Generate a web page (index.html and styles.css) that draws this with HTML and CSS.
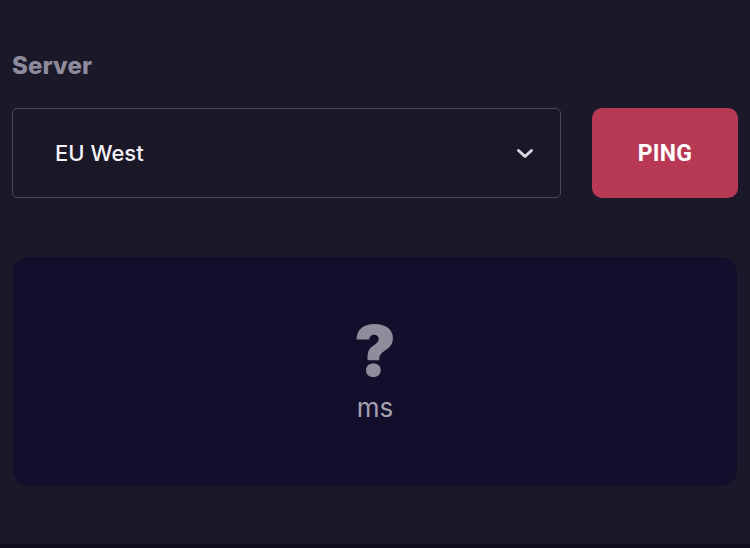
FILE: index.html
```html
<!DOCTYPE html>
<html lang="en">
<head>
<meta charset="utf-8">
<title>Ping</title>
<link rel="stylesheet" href="styles.css">
</head>
<body>
<main class="page">
  <label class="label" for="server">Server</label>
  <div class="controls">
    <div class="select">
      <span class="select-value">EU West</span>
      <svg class="chevron" width="18" height="12" viewBox="0 0 18 12" aria-hidden="true">
        <path d="M2.5 2.5 L9 8.5 L15.5 2.5" fill="none" stroke="#d9d7e2" stroke-width="3" stroke-linecap="round" stroke-linejoin="round"/>
      </svg>
    </div>
    <button class="ping">PING</button>
  </div>
  <section class="result">
    <div class="result-value">?</div>
    <div class="result-unit">ms</div>
  </section>
</main>
<div class="footer-strip"></div>
</body>
</html>
```

FILE: styles.css
```css
html, body {
  margin: 0;
  padding: 0;
  height: 100%;
}
body {
  background: #1b1829;
  font-family: Inter, "Noto Sans", sans-serif;
  color: #ffffff;
  display: flex;
  flex-direction: column;
  overflow: hidden;
}
.page {
  flex: 1;
  padding: 52px 12px 0 12px;
  display: flex;
  flex-direction: column;
}
.label {
  font-size: 24px;
  line-height: 28px;
  font-weight: 800;
  color: #8e8b9c;
  letter-spacing: 0.1px;
}
.controls {
  margin-top: 28px;
  display: flex;
  gap: 31px;
  height: 90px;
}
.select {
  flex: 1;
  box-sizing: border-box;
  border: 1px solid #4a4758;
  border-radius: 5px;
  display: flex;
  align-items: center;
  justify-content: space-between;
  padding: 0 26px 0 42px;
  background: #1a1727;
}
.select-value {
  font-size: 22px;
  font-weight: 500;
  color: #f4f3f8;
}
.chevron {
  display: block;
  margin-top: 2px;
}
.ping {
  width: 146px;
  border: none;
  border-radius: 10px;
  background: #b73954;
  color: #ffffff;
  font-family: Roboto, "Liberation Sans", sans-serif;
  font-weight: 700;
  font-size: 23px;
  letter-spacing: 0.3px;
  padding: 0;
}
.result {
  margin-top: 59px;
  height: 229px;
  margin-left: 1px;
  margin-right: 1px;
  border-radius: 16px;
  background: #120e2b;
  display: flex;
  flex-direction: column;
  align-items: center;
  justify-content: center;
}
.result-value {
  font-size: 70px;
  font-weight: 900;
  line-height: 68px;
  color: #8f8d9b;
  margin-top: -4px;
}
.result-unit {
  font-size: 26px;
  line-height: 30px;
  color: #a4a2b0;
  margin-top: 8px;
}
.footer-strip {
  height: 4px;
  background: #110e20;
}
```
